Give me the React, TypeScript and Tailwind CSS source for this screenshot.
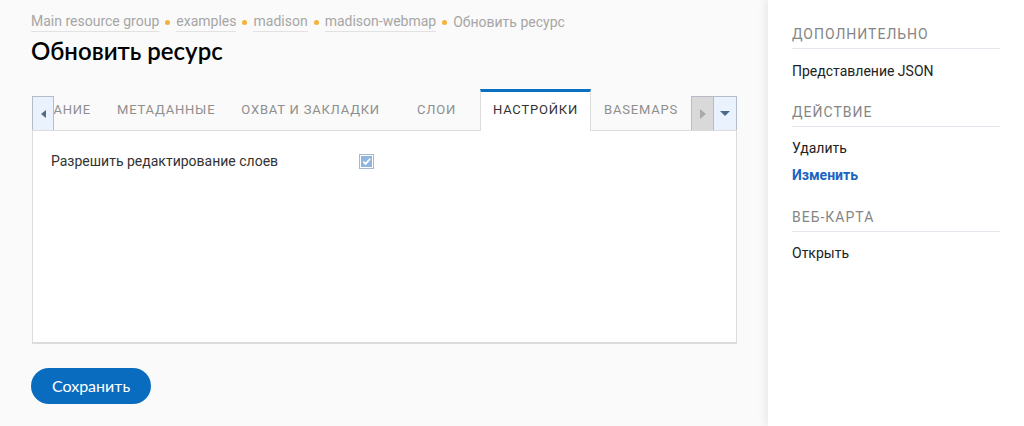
import React from "react";

const crumbs = ["Main resource group", "examples", "madison", "madison-webmap"];
const tabs = ["Описание", "Метаданные", "Охват и закладки", "Слои", "Настройки", "Basemaps"];
const activeTab = "Настройки";

function Bullet() {
  return <span className="mx-[6px] inline-block h-[5px] w-[5px] rounded-full bg-[#f6b23c]" />;
}

function SideHeading({ children, className = "" }: { children: React.ReactNode; className?: string }) {
  return (
    <div className={`border-b border-[#e3e8ee] pb-[4px] text-sm leading-[20px] tracking-[1px] text-[#858585] uppercase ${className}`}>
      {children}
    </div>
  );
}

export default function App() {
  return (
    <div className="flex min-h-screen font-['Roboto',sans-serif]">
      {/* main column */}
      <div className="w-[768px] shrink-0 bg-[#fafafa] pl-[31px] pr-[31px] pt-[12px]">
        <div className="flex items-center text-sm leading-[18px] text-[#a6a6a6]">
          {crumbs.map((c) => (
            <React.Fragment key={c}>
              <a className="border-b border-[#e2e2e2] pb-px">{c}</a>
              <Bullet />
            </React.Fragment>
          ))}
          <span className="pb-px">Обновить ресурс</span>
        </div>

        <h1 className="mt-[3px] font-['Lato',sans-serif] text-2xl leading-[32px] font-semibold text-black">
          Обновить ресурс
        </h1>

        <div className="ml-px mt-[22px]">
          {/* tab strip */}
          <div className="flex h-[41px]">
            <div className="flex items-end">
              <div className="flex h-[34px] w-[22px] items-center justify-center border border-b-0 border-[#b5bcc7] bg-[#eaf3fd]">
                <span className="h-0 w-0 border-y-[4px] border-r-[5px] border-y-transparent border-r-[#4d6a86]" />
              </div>
            </div>
            <div className="relative z-10 flex h-[42px] min-w-0 flex-1 justify-end overflow-hidden">
              {tabs.map((t) =>
                t === activeTab ? (
                  <div
                    key={t}
                    className="flex h-[42px] shrink-0 items-center border-x border-t-[3px] border-x-[#dcdcdc] border-t-[#0a70c2] bg-white px-[12px] pb-[3px] text-[13px] tracking-[0.8px] text-[#333] uppercase"
                  >
                    {t}
                  </div>
                ) : (
                  <div
                    key={t}
                    className={`flex h-[41px] shrink-0 items-center justify-center text-[13px] tracking-[0.8px] whitespace-nowrap text-[#8e8e8e] uppercase ${
                      t === "Слои" ? "w-[87px]" : "px-[13px]"
                    }`}
                  >
                    {t}
                  </div>
                )
              )}
            </div>
            <div className="flex items-end">
              <div className="flex h-[34px] w-[23px] items-center justify-center border border-b-0 border-[#b5bcc7] bg-[#d9d9d9]">
                <span className="h-0 w-0 border-y-[5px] border-l-[6px] border-y-transparent border-l-[#a9a9a9]" />
              </div>
              <div className="flex h-[34px] w-[23px] items-center justify-center border border-b-0 border-l-0 border-[#b5bcc7] bg-[#eaf3fd]">
                <span className="h-0 w-0 border-x-[5px] border-t-[5px] border-x-transparent border-t-[#4d6a86]" />
              </div>
            </div>
          </div>

          {/* panel */}
          <div className="h-[214px] border border-b-2 border-[#dcdcdc] bg-white pl-[18px] pt-[20px]">
            <div className="flex items-center text-sm leading-[20px] text-[#333]">
              <span className="w-[308px]">Разрешить редактирование слоев</span>
              <span className="flex h-[15px] w-[15px] items-center justify-center border border-[#a9b8c8] bg-white p-px">
                <svg viewBox="0 0 12 12" className="h-[11px] w-[11px]">
                  <rect x="0" y="0" width="12" height="12" fill="#8fb6df" />
                  <path d="M2.5 6.2 L5 8.6 L10 3" stroke="white" strokeWidth="2" fill="none" />
                </svg>
              </span>
            </div>
          </div>
        </div>

        <button className="mt-[24px] h-[36px] w-[120px] rounded-full bg-[#0a6cbf] font-['Lato',sans-serif] text-base text-white">
          Сохранить
        </button>
      </div>

      {/* sidebar */}
      <div className="flex-1 bg-white px-[24px] pt-[24px] shadow-[-3px_0_8px_rgba(0,0,0,0.07)]">
        <SideHeading>Дополнительно</SideHeading>
        <div className="mt-[12px] text-sm leading-[20px] text-[#222]">Представление JSON</div>

        <SideHeading className="mt-[21px]">Действие</SideHeading>
        <div className="mt-[11px] text-sm leading-[20px] text-[#222]">Удалить</div>
        <div className="mt-[7px] text-sm leading-[20px] font-bold text-[#1864c0]">Изменить</div>

        <SideHeading className="mt-[22px]">Веб-карта</SideHeading>
        <div className="mt-[11px] text-sm leading-[20px] text-[#222]">Открыть</div>
      </div>
    </div>
  );
}
